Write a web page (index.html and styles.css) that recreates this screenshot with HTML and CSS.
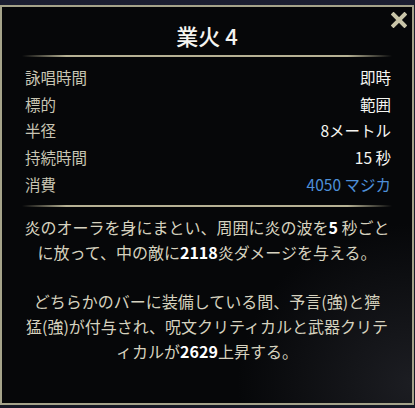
FILE: index.html
```html
<!DOCTYPE html>
<html lang="ja">
<head>
    <meta charset="UTF-8">
    <meta name="viewport" content="width=device-width, initial-scale=1.0">
    <title>業火 4</title>
    <link rel="stylesheet" href="styles.css">
</head>
<body>
    <div class="tooltip">
        <span class="close">
            <svg width="16" height="16" viewBox="0 0 16 16">
                <path d="M2.5 2.5 L13.5 13.5 M13.5 2.5 L2.5 13.5" stroke="#c8c4a8" stroke-width="4" stroke-linecap="square"/>
            </svg>
        </span>
        <h1 class="title">業火 4</h1>
        <div class="divider"></div>

        <div class="stats">
            <div class="row"><span class="label">詠唱時間</span><span class="value">即時</span></div>
            <div class="row"><span class="label">標的</span><span class="value">範囲</span></div>
            <div class="row"><span class="label">半径</span><span class="value">8メートル</span></div>
            <div class="row"><span class="label">持続時間</span><span class="value">15 秒</span></div>
            <div class="row"><span class="label">消費</span><span class="value cost">4050 マジカ</span></div>
        </div>

        <div class="divider"></div>

        <div class="desc">
            <p>炎のオーラを身にまとい、周囲に炎の波を<b>5</b> 秒ごと<br>に放って、中の敵に<b>2118</b>炎ダメージを与える。</p>
            <p>どちらかのバーに装備している間、予言(強)と獰<br>猛(強)が付与され、呪文クリティカルと武器クリテ<br>ィカルが<b>2629</b>上昇する。</p>
        </div>
    </div>
</body>
</html>
```

FILE: styles.css
```css
body {
    margin: 0;
    padding: 5px 0 3px;
    background: linear-gradient(#1b1e31, #161826);
    font-family: "Noto Sans CJK JP", "Noto Sans", sans-serif;
}
.tooltip {
    position: relative;
    box-sizing: border-box;
    width: 414px;
    height: 400px;
    border: 2px solid #a5a38a;
    background: radial-gradient(ellipse at 100% 95%, #1c1d22 0%, #060709 30%), #060709;
    padding: 0 20px;
}
.close {
    position: absolute;
    top: 5px;
    right: 5px;
    line-height: 0;
}
.title {
    margin: 0;
    padding-top: 14px;
    height: 28px;
    line-height: 28px;
    font-size: 22px;
    font-weight: 500;
    color: #f4f4f0;
    text-align: center;
}
.divider {
    height: 2px;
    background: linear-gradient(to right, rgba(180, 175, 145, 0), #b6b194 12%, #b6b194 88%, rgba(180, 175, 145, 0));
}
.tooltip > .divider:first-of-type {
    margin-top: 6px;
}
.stats {
    padding: 7px 1px 8px 3px;
}
.row {
    display: flex;
    justify-content: space-between;
    height: 26.7px;
    line-height: 26.7px;
    font-size: 15.5px;
}
.label {
    color: #c8c5b3;
}
.value {
    color: #f6f6f2;
}
.cost {
    color: #4d8fd8;
}
.desc {
    padding-top: 8px;
    text-align: center;
    color: #d6d2bf;
    font-size: 16px;
    line-height: 25px;
}
.desc p {
    margin: 0 0 24px;
    white-space: nowrap;
}
.desc b {
    color: #ffffff;
    font-weight: 700;
}
```
